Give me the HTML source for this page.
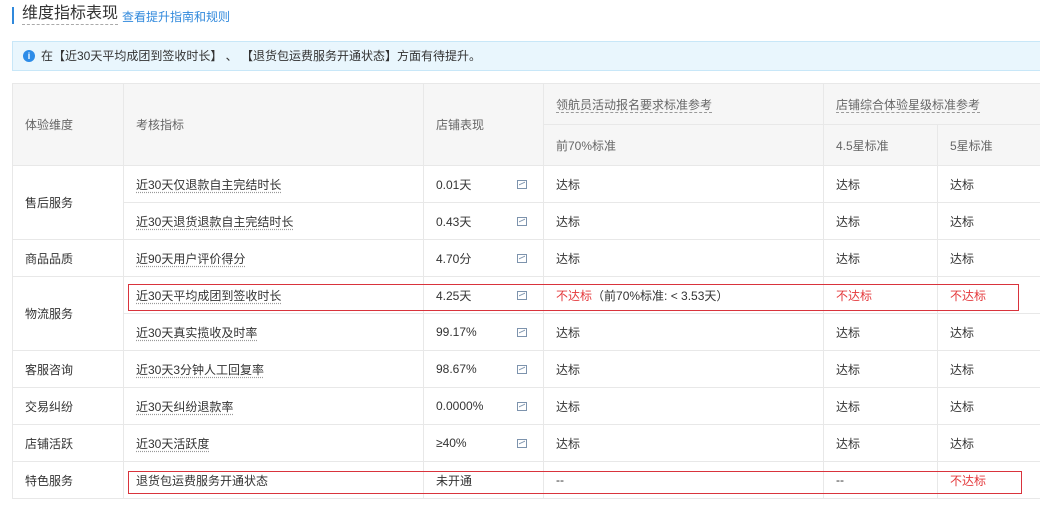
<!DOCTYPE html>
<html><head><meta charset="utf-8"><style>
*{margin:0;padding:0;box-sizing:border-box}
body{width:1040px;height:521px;overflow:hidden;background:#fff;font-family:"Liberation Sans","Noto Sans CJK SC",sans-serif;font-size:12px;color:#333;position:relative}
.bar{position:absolute;left:12px;top:7px;width:2px;height:17px;background:#3089dc}
.title{position:absolute;left:22px;top:4px;font-size:16px;color:#333;border-bottom:1px dashed #aaa;line-height:20px}
.link{position:absolute;left:122px;top:8px;font-size:12px;color:#3089dc}
.info{position:absolute;left:12px;top:41px;width:1040px;height:30px;background:#e9f6fd;border:1px solid #c8e7f8;line-height:28px;padding-left:28px;font-size:12px;color:#333}
.info i{position:absolute;left:10px;top:8px;width:12px;height:12px;border-radius:50%;background:#2d8ce8;color:#fff;font-style:normal;font-size:9px;line-height:12px;text-align:center;font-weight:bold}
table{position:absolute;left:12px;top:83px;border-collapse:collapse;table-layout:fixed;width:1040px}
td{border:1px solid #e8e8e8;height:37px;padding-left:12px;vertical-align:middle;white-space:nowrap}
thead td{background:#f6f6f6;color:#666}
tbody td{background:#fff}
.u{text-decoration:underline dotted #999;text-underline-offset:3px}
.ul{border-bottom:1px dashed #999}
.r{color:#e4393c}
.ch{display:inline-block;width:10px;height:9px;border:1px solid #7d93ad;position:relative;vertical-align:middle}
.ch:after{content:"";position:absolute;left:1px;top:2px;width:6px;height:3px;border-top:1px solid #7d93ad;transform:skewY(-25deg)}
.p{position:relative}
.p .ch{position:absolute;left:93px;top:14px}
.box{position:absolute;border:1px solid #d9333c}
</style></head><body>
<div class="bar"></div>
<div class="title">维度指标表现</div>
<div class="link">查看提升指南和规则</div>
<div class="info"><i>i</i>在【近30天平均成团到签收时长】 、 【退货包运费服务开通状态】方面有待提升。</div>
<table>
<colgroup><col style="width:111px"><col style="width:300px"><col style="width:120px"><col style="width:280px"><col style="width:114px"><col style="width:115px"></colgroup>
<thead>
<tr><td rowspan="2" style="height:82px">体验维度</td><td rowspan="2">考核指标</td><td rowspan="2">店铺表现</td><td style="height:41px"><span class="ul">领航员活动报名要求标准参考</span></td><td colspan="2"><span class="ul">店铺综合体验星级标准参考</span></td></tr>
<tr><td style="height:41px">前70%标准</td><td>4.5星标准</td><td>5星标准</td></tr>
</thead>
<tbody>
<tr><td rowspan="2">售后服务</td><td><span class="u">近30天仅退款自主完结时长</span></td><td class="p">0.01天<span class="ch"></span></td><td>达标</td><td>达标</td><td>达标</td></tr>
<tr><td><span class="u">近30天退货退款自主完结时长</span></td><td class="p">0.43天<span class="ch"></span></td><td>达标</td><td>达标</td><td>达标</td></tr>
<tr><td>商品品质</td><td><span class="u">近90天用户评价得分</span></td><td class="p">4.70分<span class="ch"></span></td><td>达标</td><td>达标</td><td>达标</td></tr>
<tr><td rowspan="2">物流服务</td><td><span class="u">近30天平均成团到签收时长</span></td><td class="p">4.25天<span class="ch"></span></td><td><span class="r">不达标</span>（前70%标准: &lt; 3.53天）</td><td class="r">不达标</td><td class="r">不达标</td></tr>
<tr><td><span class="u">近30天真实揽收及时率</span></td><td class="p">99.17%<span class="ch"></span></td><td>达标</td><td>达标</td><td>达标</td></tr>
<tr><td>客服咨询</td><td><span class="u">近30天3分钟人工回复率</span></td><td class="p">98.67%<span class="ch"></span></td><td>达标</td><td>达标</td><td>达标</td></tr>
<tr><td>交易纠纷</td><td><span class="u">近30天纠纷退款率</span></td><td class="p">0.0000%<span class="ch"></span></td><td>达标</td><td>达标</td><td>达标</td></tr>
<tr><td>店铺活跃</td><td><span class="u">近30天活跃度</span></td><td class="p">≥40%<span class="ch"></span></td><td>达标</td><td>达标</td><td>达标</td></tr>
<tr><td>特色服务</td><td>退货包运费服务开通状态</td><td>未开通</td><td>--</td><td>--</td><td class="r">不达标</td></tr>
</tbody></table>
<div class="box" style="left:128px;top:284px;width:891px;height:27px"></div>
<div class="box" style="left:128px;top:471px;width:894px;height:23px"></div>
</body></html>
